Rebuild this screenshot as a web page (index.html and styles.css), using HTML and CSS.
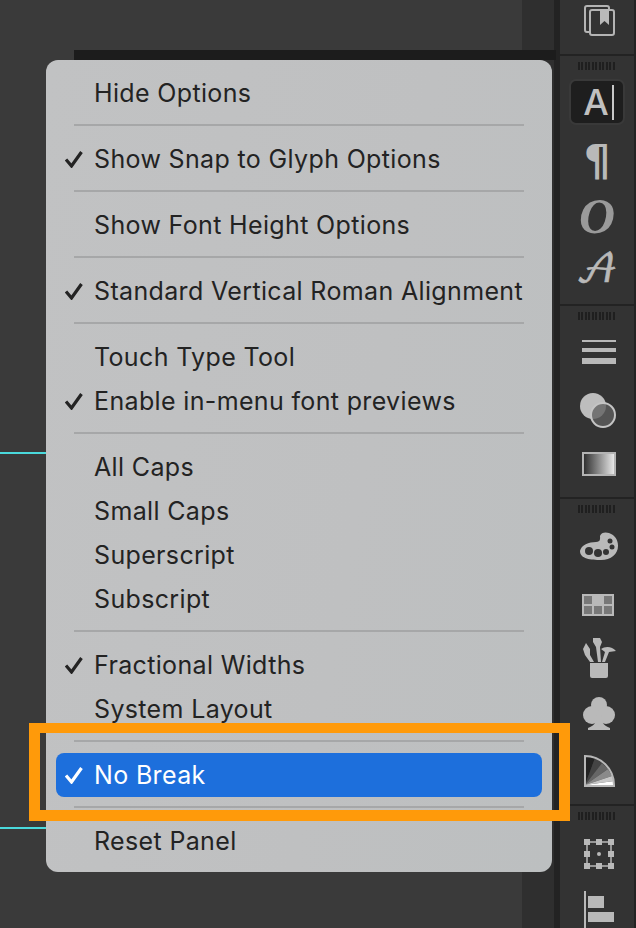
FILE: index.html
```html
<!DOCTYPE html>
<html lang="en">
<head>
    <meta charset="UTF-8">
    <title>Character panel menu</title>
    <link rel="stylesheet" href="styles.css">
</head>
<body>
    <div class="app">
        <div class="canvas">
            <div class="canvas-side"></div>
            <div class="canvas-bar"></div>
            <div class="guide guide-top"></div>
            <div class="guide guide-bottom"></div>
        </div>

        <div class="panel">
            <div class="section section-first">
                <div class="tool tool-top">
                    <svg class="icon" viewBox="0 0 48 48">
                        <rect x="12" y="10" width="24" height="26" rx="2" class="line"/>
                        <rect x="17" y="14" width="24" height="25" rx="2" class="line cut"/>
                        <path d="M27 13h9v16l-4.500-4-4.500 4z" class="solid"/>
                    </svg>
                </div>
            </div>

            <div class="section section-type">
                <div class="grip"></div>
                <div class="tool tool-active">
                    <div class="type-btn"><span class="type-a">A</span><span class="type-cursor"></span></div>
                </div>
                <div class="tool"><span class="glyph glyph-para">¶</span></div>
                <div class="tool"><span class="glyph glyph-italic">O</span></div>
                <div class="tool"><span class="glyph glyph-script">𝒜</span></div>
            </div>

            <div class="section section-look">
                <div class="grip"></div>
                <div class="tool">
                    <svg class="icon" viewBox="0 0 48 48">
                        <rect x="9" y="12" width="34" height="2" class="solid"/>
                        <rect x="9" y="20" width="34" height="4" class="solid"/>
                        <rect x="9" y="30" width="34" height="6" class="solid"/>
                    </svg>
                </div>
                <div class="tool">
                    <svg class="icon" viewBox="0 0 48 48">
                        <defs>
                            <clipPath id="bigCircle"><circle cx="20" cy="22" r="13"/></clipPath>
                        </defs>
                        <circle cx="20" cy="22" r="13" fill="#bdbdbd"/>
                        <circle cx="30" cy="31" r="12" fill="#555"/>
                        <circle cx="30" cy="31" r="12" fill="#747474" clip-path="url(#bigCircle)"/>
                        <circle cx="30" cy="31" r="12" fill="none" stroke="#c4c4c4" stroke-width="2"/>
                    </svg>
                </div>
                <div class="tool">
                    <svg class="icon" viewBox="0 0 48 48">
                        <defs>
                            <linearGradient id="ramp">
                                <stop offset="0" stop-color="#2a2a2a"/>
                                <stop offset="1" stop-color="#eee"/>
                            </linearGradient>
                        </defs>
                        <rect x="10" y="13" width="32" height="22" fill="url(#ramp)" stroke="#b4b4b4" stroke-width="2"/>
                    </svg>
                </div>
            </div>

            <div class="section section-colour">
                <div class="grip"></div>
                <div class="tool">
                    <svg class="icon" viewBox="0 0 48 48">
                        <path d="M7 30C8 24 16 21 23 21 28 21 27 17 27 15 28 11 33 11 36 12 42 14 45 19 45 25 45 33 38 39 28 39 18 39 7 38 7 30Z" class="solid"/>
                        <circle cx="16" cy="30" r="4" class="hole"/>
                        <circle cx="25" cy="32" r="4" class="hole"/>
                        <circle cx="33" cy="31" r="3" class="hole"/>
                        <circle cx="39" cy="26" r="2.500" class="hole"/>
                        <circle cx="37" cy="20" r="2.500" class="hole"/>
                    </svg>
                </div>
                <div class="tool">
                    <svg class="icon" viewBox="0 0 48 48">
                        <rect x="9" y="17" width="32" height="22" class="solid"/>
                        <rect x="11" y="19" width="8" height="8" class="cell"/>
                        <rect x="31" y="19" width="8" height="8" class="cell"/>
                        <rect x="11" y="29" width="8" height="8" class="cell"/>
                        <rect x="21" y="29" width="8" height="8" class="cell"/>
                        <rect x="31" y="29" width="8" height="8" class="cell"/>
                    </svg>
                </div>
                <div class="tool">
                    <svg class="icon" viewBox="0 0 48 48">
                        <path d="M17 30h18v13a2 2 0 0 1-2 2H19a2 2 0 0 1-2-2z" class="solid"/>
                        <path d="M20 5h7l2 4-2 5 1 15h-3l-2-15-3-5z" class="solid"/>
                        <path d="M17 29l-5-7-2-6 3-6 4 6 0 6 4 7z" class="solid"/>
                        <path d="M29 29l3-10-4-3c4-3 11-3 15 2l-7 1-4 10z" class="solid"/>
                    </svg>
                </div>
                <div class="tool">
                    <svg class="icon" viewBox="0 0 48 48">
                        <circle cx="26" cy="16" r="8" class="solid"/>
                        <circle cx="19" cy="26" r="9" class="solid"/>
                        <circle cx="33" cy="26" r="9" class="solid"/>
                        <path d="M24 24h4c0 8 1 12 9 15v2H15v-2c8-3 9-7 9-15z" class="solid"/>
                    </svg>
                </div>
                <div class="tool">
                    <svg class="icon" viewBox="0 0 48 48">
                        <path d="M12 40V11L22 13 12 40z" fill="#222"/>
                        <path d="M12 40L22 13 29 18z" fill="#444"/>
                        <path d="M12 40L29 18 35 24z" fill="#666"/>
                        <path d="M12 40L35 24 39 31z" fill="#8a8a8a"/>
                        <path d="M12 40L39 31 41 36z" fill="#c8c8c8"/>
                        <path d="M12 40L41 36 41 40z" fill="#fff"/>
                        <path d="M12 41V11A29 29 0 0 1 41 40V41z" fill="none" stroke="#b8b8b8" stroke-width="2"/>
                    </svg>
                </div>
            </div>

            <div class="section">
                <div class="grip"></div>
                <div class="tool">
                    <svg class="icon" viewBox="0 0 48 48">
                        <rect x="14" y="14" width="24" height="24" fill="none" stroke="#b8b8b8" stroke-width="1.500"/>
                        <path d="M11 11h6v6h-6zM23 11h6v6h-6zM35 11h6v6h-6zM11 23h6v6h-6zM35 23h6v6h-6zM11 35h6v6h-6zM23 35h6v6h-6zM35 35h6v6h-6z" class="solid"/>
                        <circle cx="26" cy="26" r="2" class="solid"/>
                    </svg>
                </div>
                <div class="tool">
                    <svg class="icon" viewBox="0 0 48 48">
                        <rect x="11" y="7" width="2" height="41" class="solid"/>
                        <rect x="15" y="12" width="16" height="12" class="solid"/>
                        <rect x="15" y="28" width="26" height="10" class="solid"/>
                    </svg>
                </div>
            </div>
        </div>

        <div class="menu">
            <div class="item"><span class="check"></span>Hide Options</div>
            <div class="sep"></div>
            <div class="item"><span class="check"><svg viewBox="0 0 18 18"><path d="M1 9.500l5.500 6.500 10-14"/></svg></span>Show Snap to Glyph Options</div>
            <div class="sep"></div>
            <div class="item"><span class="check"></span>Show Font Height Options</div>
            <div class="sep"></div>
            <div class="item"><span class="check"><svg viewBox="0 0 18 18"><path d="M1 9.500l5.500 6.500 10-14"/></svg></span>Standard Vertical Roman Alignment</div>
            <div class="sep"></div>
            <div class="item"><span class="check"></span>Touch Type Tool</div>
            <div class="item"><span class="check"><svg viewBox="0 0 18 18"><path d="M1 9.500l5.500 6.500 10-14"/></svg></span>Enable in-menu font previews</div>
            <div class="sep"></div>
            <div class="item"><span class="check"></span>All Caps</div>
            <div class="item"><span class="check"></span>Small Caps</div>
            <div class="item"><span class="check"></span>Superscript</div>
            <div class="item"><span class="check"></span>Subscript</div>
            <div class="sep"></div>
            <div class="item"><span class="check"><svg viewBox="0 0 18 18"><path d="M1 9.500l5.500 6.500 10-14"/></svg></span>Fractional Widths</div>
            <div class="item"><span class="check"></span>System Layout</div>
            <div class="sep"></div>
            <div class="item item-active"><span class="check"><svg viewBox="0 0 18 18"><path d="M1 9.500l5.500 6.500 10-14"/></svg></span>No Break</div>
            <div class="sep"></div>
            <div class="item"><span class="check"></span>Reset Panel</div>
        </div>

        <div class="callout"></div>
    </div>
</body>
</html>
```

FILE: styles.css
```css
html, body { margin: 0; padding: 0; background: #3a3a3a; }
.app { position: relative; display: flex; width: 636px; height: 928px; overflow: hidden; font-family: Inter, "Liberation Sans", sans-serif; }

/* document area behind the menu */
.canvas { position: relative; flex: 1; background: #3a3a3a; }
.canvas-side { position: absolute; top: 0; right: 0; bottom: 0; width: 34px; background: #2f2f2f; border-right: 2px solid #232323; box-sizing: border-box; }
.canvas-bar { position: absolute; top: 50px; left: 74px; right: 0; height: 10px; background: #1c1c1c; }
.guide { position: absolute; left: 0; width: 60px; height: 2px; background: #4ad9dc; }
.guide-top { top: 452px; }
.guide-bottom { top: 827px; }

/* right tool strip */
.panel { width: 74px; background: #333; border-left: 4px solid #232323; border-right: 2px solid #232323; }
.section { border-bottom: 2px solid #232323; box-sizing: content-box; }
.section-first { height: 54px; }
.section-type { padding-bottom: 4px; }
.section-look { padding-bottom: 5px; }
.section-colour { padding-bottom: 7px; }
.grip { width: 38px; height: 8px; margin: 6px auto 4px; background: repeating-linear-gradient(90deg, #1f1f1f 0 2px, transparent 2px 3.5px); }
.tool { display: flex; justify-content: center; align-items: center; height: 56px; }
.tool-top { height: 40px; }
.tool-active { margin-bottom: 2px; }
.icon { width: 48px; height: 48px; flex: none; }
.solid { fill: #b9b9b9; }
.line { fill: none; stroke: #b4b4b4; stroke-width: 2; }
.cut { fill: #333; }
.hole { fill: #333; }
.cell { fill: #787878; }

.type-btn { display: flex; justify-content: center; align-items: center; width: 56px; height: 46px; padding-left: 3px; box-sizing: border-box; background: #1e1e1e; border: 2px solid #393939; border-radius: 7px; }
.type-a { color: #c0c0c0; font-size: 36px; font-weight: 500; line-height: 1; }
.type-cursor { width: 2px; height: 35px; margin-left: 3px; background: #c8c8c8; }
.glyph { color: #b9b9b9; line-height: 1; }
.glyph-para { font: bold 42px "DejaVu Sans", sans-serif; }
.glyph-italic { font: italic bold 50px "Liberation Serif", serif; color: #9a9a9a; }
.glyph-script { font: 40px "DejaVu Math TeX Gyre", "DejaVu Serif", serif; -webkit-text-stroke: 0.6px #b9b9b9; transform: translateY(-2px); }

/* popup menu */
.menu { position: absolute; top: 60px; left: 46px; width: 506px; height: 812px; box-sizing: border-box; padding: 11px 10px 9px; background: linear-gradient(100deg, #c1c2c3, #bfc0c1 60%, #bcbfc0); border-radius: 12px; color: #232323; font-size: 25px; letter-spacing: 0.35px; }
.item { display: flex; align-items: center; height: 44px; border-radius: 8px; white-space: nowrap; }
.item-active { background: #1d6fdc; color: #fff; }
.check { display: flex; flex: none; width: 38px; padding-left: 9px; box-sizing: border-box; }
.check svg { width: 18px; height: 18px; fill: none; stroke: currentColor; stroke-width: 3.2; }
.sep { height: 2px; margin: 9px 18px 11px; background: #a6a7a8; }

/* orange highlight drawn over the screenshot */
.callout { position: absolute; top: 723px; left: 29px; width: 541px; height: 98px; box-sizing: border-box; border: 11px solid #ff9a0a; border-top-width: 10px; }
```
